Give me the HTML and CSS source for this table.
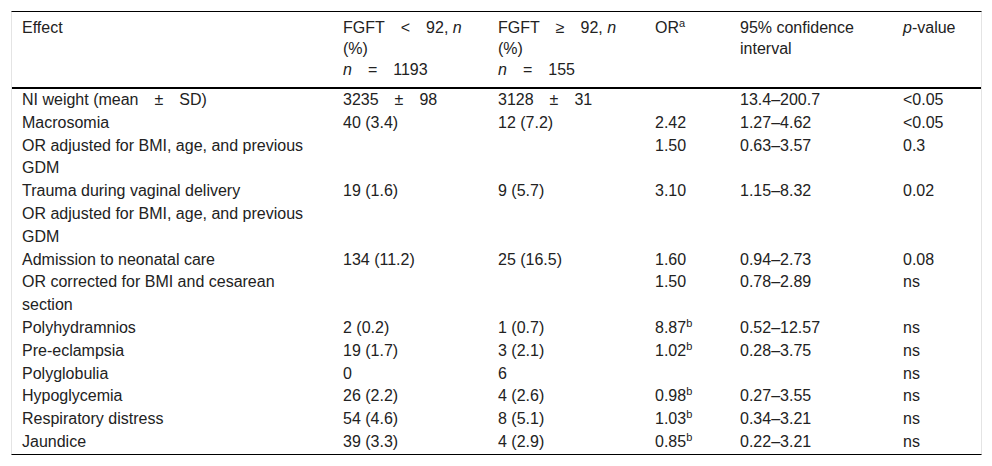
FILE: index.html
```html
<!DOCTYPE html>
<html lang="en">
<head>
<meta charset="utf-8">
<title>Table</title>
<link rel="stylesheet" href="styles.css">
</head>
<body>
<div class="wrap">
<table class="data">
<colgroup>
<col class="c1"><col class="c2"><col class="c3"><col class="c4"><col class="c5"><col class="c6">
</colgroup>
<thead>
<tr>
<th>Effect</th>
<th>FGFT&emsp;&lt;&emsp;92, <i>n</i> (%)<br><i>n</i>&emsp;=&emsp;1193</th>
<th>FGFT&emsp;&ge;&emsp;92, <i>n</i> (%)<br><i>n</i>&emsp;=&emsp;155</th>
<th>OR<sup>a</sup></th>
<th>95% confidence interval</th>
<th><i>p</i>-value</th>
</tr>
</thead>
<tbody>
<tr><td>NI weight (mean&emsp;&plusmn;&emsp;SD)</td><td>3235&emsp;&plusmn;&emsp;98</td><td>3128&emsp;&plusmn;&emsp;31</td><td></td><td>13.4&ndash;200.7</td><td>&lt;0.05</td></tr>
<tr><td>Macrosomia</td><td>40 (3.4)</td><td>12 (7.2)</td><td>2.42</td><td>1.27&ndash;4.62</td><td>&lt;0.05</td></tr>
<tr><td>OR adjusted for BMI, age, and previous GDM</td><td></td><td></td><td>1.50</td><td>0.63&ndash;3.57</td><td>0.3</td></tr>
<tr><td>Trauma during vaginal delivery</td><td>19 (1.6)</td><td>9 (5.7)</td><td>3.10</td><td>1.15&ndash;8.32</td><td>0.02</td></tr>
<tr><td>OR adjusted for BMI, age, and previous GDM</td><td></td><td></td><td></td><td></td><td></td></tr>
<tr><td>Admission to neonatal care</td><td>134 (11.2)</td><td>25 (16.5)</td><td>1.60</td><td>0.94&ndash;2.73</td><td>0.08</td></tr>
<tr><td>OR corrected for BMI and cesarean section</td><td></td><td></td><td>1.50</td><td>0.78&ndash;2.89</td><td>ns</td></tr>
<tr><td>Polyhydramnios</td><td>2 (0.2)</td><td>1 (0.7)</td><td>8.87<sup>b</sup></td><td>0.52&ndash;12.57</td><td>ns</td></tr>
<tr><td>Pre-eclampsia</td><td>19 (1.7)</td><td>3 (2.1)</td><td>1.02<sup>b</sup></td><td>0.28&ndash;3.75</td><td>ns</td></tr>
<tr><td>Polyglobulia</td><td>0</td><td>6</td><td></td><td></td><td>ns</td></tr>
<tr><td>Hypoglycemia</td><td>26 (2.2)</td><td>4 (2.6)</td><td>0.98<sup>b</sup></td><td>0.27&ndash;3.55</td><td>ns</td></tr>
<tr><td>Respiratory distress</td><td>54 (4.6)</td><td>8 (5.1)</td><td>1.03<sup>b</sup></td><td>0.34&ndash;3.21</td><td>ns</td></tr>
<tr><td>Jaundice</td><td>39 (3.3)</td><td>4 (2.9)</td><td>0.85<sup>b</sup></td><td>0.22&ndash;3.21</td><td>ns</td></tr>
</tbody>
</table>
</div>
</body>
</html>
```

FILE: styles.css
```css
html, body {
  margin: 0;
  padding: 0;
  background: #fff;
}

.wrap {
  padding: 11px 10px 0 11px;
}

.data {
  width: 971px;
  table-layout: fixed;
  border-collapse: separate;
  border-spacing: 0;
  border-top: 1px solid #000;
  border-bottom: 1px solid #000;
  border-left: 1px solid #e4e4e4;
  border-right: 1px solid #e4e4e4;
  font-family: "Liberation Sans", Arial, sans-serif;
  font-size: 16px;
  color: #222;
}

.c1 { width: 321px; }
.c2 { width: 155px; }
.c3 { width: 157px; }
.c4 { width: 85px; }
.c5 { width: 163px; }
.c6 { width: 88px; }

.data th {
  font-weight: normal;
  text-align: left;
  vertical-align: top;
  line-height: 21px;
  padding: 5px 10px 7px 10px;
  border-bottom: 2px solid #000;
}

.data td {
  text-align: left;
  vertical-align: top;
  line-height: 22.8px;
  padding: 0 10px;
}

.data sup {
  font-size: 11px;
  line-height: 0;
  vertical-align: 6px;
}
```
